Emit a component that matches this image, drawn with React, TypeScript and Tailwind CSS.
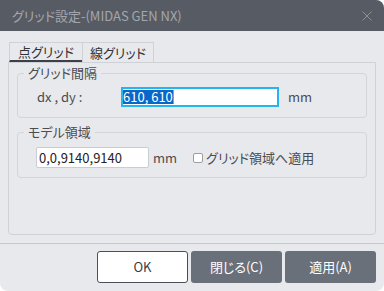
export default function App() {
  return (
    <div className="w-[384px] h-[291px] bg-white font-['Noto_Sans_CJK_JP',sans-serif] [font-feature-settings:'palt'] text-[13px] leading-[16px] text-[#3a3d42]">
      <div className="h-full flex flex-col bg-[#e8e9ed] rounded-tr-[8px] rounded-b-[8px] overflow-hidden">
        {/* title bar */}
        <div className="h-[31px] shrink-0 bg-[#575c64] flex items-center justify-between pl-[12px] pr-[12px]">
          <span className="text-[#a3a7ad]">グリッド設定-(MIDAS GEN NX)</span>
          <svg width="10" height="10" viewBox="0 0 10 10">
            <path d="M0.5 0.5L9.5 9.5M9.5 0.5L0.5 9.5" stroke="#8c9097" strokeWidth="1" />
          </svg>
        </div>

        <div className="px-[8px] pt-[11px]">
          {/* tabs */}
          <div className="flex h-[20px] ml-[1px]">
            <div className="w-[73px] border-t border-l border-[#cfd1d6] border-b-2 border-b-[#3c4149] flex items-center justify-center text-[#2f3237]">
              点グリッド
            </div>
            <div className="w-[72px] border-t border-l border-r border-[#cfd1d6] flex items-center justify-center text-[#2f3237]">
              線グリッド
            </div>
          </div>

          {/* pane */}
          <div className="h-[173px] border border-[#cfd1d6] rounded-b-[4px] pt-[2px]">
            <fieldset className="mx-[8px] border border-[#d3d5d9] rounded-[4px]">
              <legend className="ml-[6px] px-[4px] text-[#4a4d52]">グリッド間隔</legend>
              <div className="flex items-center pl-[19px] pt-[6px] pb-[10px]">
                <span className="w-[84px] text-[#4a4d52]">dx , dy :</span>
                <div className="w-[158px] h-[20px] bg-white border-2 border-[#25b5ee] flex items-center">
                  <span className="bg-[#0a66c9] text-white leading-[14px]">610, 610</span>
                  <span className="w-[1px] h-[14px] bg-[#f08a24]" />
                </div>
                <span className="ml-[9px] text-[#4a4d52]">mm</span>
              </div>
            </fieldset>

            <fieldset className="mx-[8px] mt-[6px] border border-[#d3d5d9] rounded-[4px]">
              <legend className="ml-[6px] px-[4px] text-[#4a4d52]">モデル領域</legend>
              <div className="flex items-center pl-[18px] pt-[7px] pb-[9px]">
                <div className="w-[113px] h-[21px] bg-white border border-[#c9ccd1] rounded-[2px] flex items-center pl-[2px] text-[#1f2226]">
                  0,0,9140,9140
                </div>
                <span className="ml-[4px] text-[#4a4d52]">mm</span>
                <span className="ml-[16px] w-[10px] h-[10px] bg-white border border-[#9a9ea5] rounded-[2px]" />
                <span className="ml-[3px] text-[#4a4d52]">グリッド領域へ適用</span>
              </div>
            </fieldset>
          </div>
        </div>

        {/* footer */}
        <div className="mt-[8px] border-t border-[#c5c8cc] flex justify-end gap-[3px] pt-[7px] pr-[8px]">
          <button className="w-[91px] h-[32px] bg-white border border-[#4b5058] rounded-[3px] text-[#3a3d42]">OK</button>
          <button className="w-[91px] h-[32px] bg-[#6a7079] rounded-[3px] text-white">閉じる(C)</button>
          <button className="w-[91px] h-[32px] bg-[#6a7079] rounded-[3px] text-white">適用(A)</button>
        </div>
      </div>
    </div>
  )
}
